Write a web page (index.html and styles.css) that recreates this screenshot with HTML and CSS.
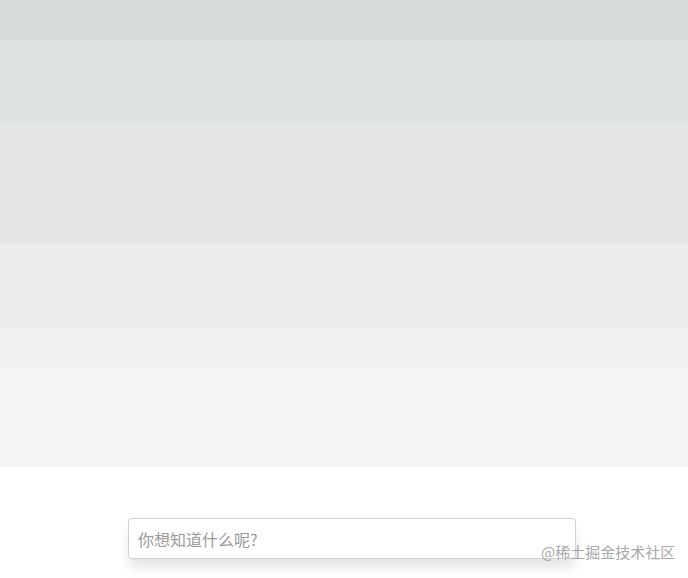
FILE: index.html
```html
<!DOCTYPE html>
<html lang="zh">
<head>
<meta charset="utf-8">
<title>搜索</title>
<link rel="stylesheet" href="styles.css">
</head>
<body>
<div class="page">
  <div class="hero">
    <div class="band b1"></div>
    <div class="band b2"></div>
    <div class="band b3"></div>
    <div class="band b4"></div>
    <div class="band b5"></div>
    <div class="band b6"></div>
  </div>
  <div class="search-area">
    <div class="search-box">
      <input class="search-input" type="text" placeholder="你想知道什么呢?">
    </div>
  </div>
  <div class="watermark">@稀土掘金技术社区</div>
</div>
</body>
</html>
```
FILE: styles.css
```css
html, body {
  margin: 0;
  padding: 0;
  background: #ffffff;
  font-family: "Noto Sans CJK SC", "Liberation Sans", sans-serif;
  overflow: hidden;
}
.page {
  position: relative;
  width: 688px;
  height: 578px;
}
.hero {
  display: flex;
  flex-direction: column;
}
.band { width: 100%; }
.b1 { height: 40px; background: #d8dbdb; }
.b2 { height: 82px; background: linear-gradient(#dde1e1, #dce1e1); }
.b3 { height: 122px; background: #e4e5e6; }
.b4 { height: 84px; background: linear-gradient(#ebeceb, #eaebea); }
.b5 { height: 39px; background: #f0f0f0; }
.b6 { height: 100px; background: #f3f4f3; }
.search-area {
  padding: 51px 0 0 128px;
}
.search-box {
  width: 448px;
  height: 41px;
  border-radius: 4px;
  box-shadow: 0 10px 12px -1px rgba(0, 0, 0, 0.1);
}
.search-input {
  box-sizing: border-box;
  width: 100%;
  height: 100%;
  border: 1px solid #cfd0d1;
  border-radius: 4px;
  padding: 0 9px;
  font-family: "Noto Sans CJK SC", "Liberation Sans", sans-serif;
  font-size: 16px;
  color: #333;
  background: #fff;
  outline: none;
}
.search-input::placeholder {
  color: #9a9a9a;
}
.watermark {
  position: absolute;
  left: 541px;
  top: 542px;
  font-size: 15px;
  line-height: 20px;
  color: #a8a8a8;
  white-space: nowrap;
}
```
